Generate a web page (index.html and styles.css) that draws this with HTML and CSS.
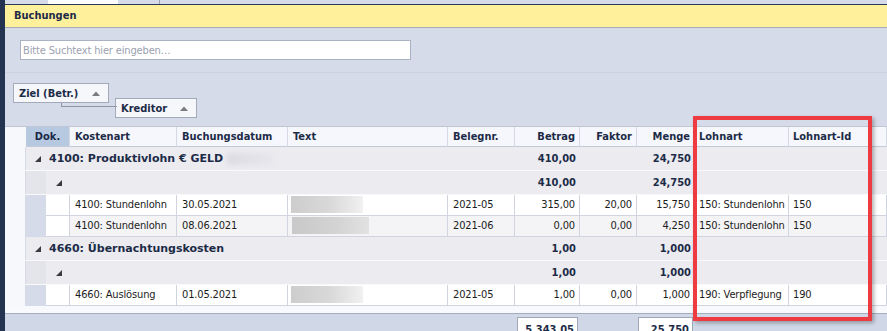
FILE: index.html
```html
<!DOCTYPE html>
<html>
    <head>
        <meta charset="UTF-8">
        <title>Buchungen</title>
        <link rel="stylesheet" href="styles.css">
    </head>
    <body>
        <div class="app">
            <div class="side"></div>

            <div class="main">
                <div class="tabs">
                    <span class="tab first"></span>
                    <span class="tab active"></span>
                    <span class="tab third"></span>
                </div>

                <div class="title">Buchungen</div>

                <div class="search-panel">
                    <input class="search" type="text" placeholder="Bitte Suchtext hier eingeben…">
                </div>

                <div class="group-panel">
                    <div class="gbox ziel">
                        Ziel (Betr.)
                        <svg class="sort" width="8" height="5" viewBox="0 0 8 5"><polygon points="0,5 4,0.5 8,5" fill="#7b7b7b"/></svg>
                    </div>
                    <div class="gbox kred">
                        Kreditor
                        <svg class="sort" width="8" height="5" viewBox="0 0 8 5"><polygon points="0,5 4,0.5 8,5" fill="#7b7b7b"/></svg>
                    </div>
                </div>

                <div class="grid">
                    <div class="row head">
                        <div class="ind"></div>
                        <div class="hcell c-dok sorted">Dok.</div>
                        <div class="hcell c-kst">Kostenart</div>
                        <div class="hcell c-dat">Buchungsdatum</div>
                        <div class="hcell c-txt">Text</div>
                        <div class="hcell c-bel">Belegnr.</div>
                        <div class="hcell c-bet num">Betrag</div>
                        <div class="hcell c-fak num">Faktor</div>
                        <div class="hcell c-men num">Menge</div>
                        <div class="hcell c-lohn">Lohnart</div>
                        <div class="hcell c-lid">Lohnart-Id</div>
                    </div>

                    <!-- group 4100 -->
                    <div class="row grp">
                        <div class="ind"></div>
                        <div class="glabel lvl1">
                            <svg class="exp" width="6" height="6" viewBox="0 0 6 6"><polygon points="6,0 6,6 0,6" fill="#3a3a3a"/></svg>
                            <span class="gtext">4100: Produktivlohn € GELD</span><span class="blur soft"></span>
                        </div>
                        <div class="gcell c-bel"></div>
                        <div class="gcell c-bet num">410,00</div>
                        <div class="gcell c-fak"></div>
                        <div class="gcell c-men num">24,750</div>
                        <div class="gcell rest"></div>
                    </div>
                    <div class="row grp">
                        <div class="ind"></div>
                        <div class="gindent"></div>
                        <div class="glabel lvl2">
                            <svg class="exp" width="6" height="6" viewBox="0 0 6 6"><polygon points="6,0 6,6 0,6" fill="#3a3a3a"/></svg>
                        </div>
                        <div class="gcell c-bel"></div>
                        <div class="gcell c-bet num">410,00</div>
                        <div class="gcell c-fak"></div>
                        <div class="gcell c-men num">24,750</div>
                        <div class="gcell rest"></div>
                    </div>
                    <div class="row data">
                        <div class="ind"></div>
                        <div class="dindent"></div>
                        <div class="cell c-dok2"></div>
                        <div class="cell c-kst">4100: Stundenlohn</div>
                        <div class="cell c-dat">30.05.2021</div>
                        <div class="cell c-txt"><span class="blur"></span></div>
                        <div class="cell c-bel">2021-05</div>
                        <div class="cell c-bet num">315,00</div>
                        <div class="cell c-fak num">20,00</div>
                        <div class="cell c-men num">15,750</div>
                        <div class="cell c-lohn">150: Stundenlohn</div>
                        <div class="cell c-lid">150</div>
                    </div>
                    <div class="row data alt">
                        <div class="ind"></div>
                        <div class="dindent"></div>
                        <div class="cell c-dok2"></div>
                        <div class="cell c-kst">4100: Stundenlohn</div>
                        <div class="cell c-dat">08.06.2021</div>
                        <div class="cell c-txt"><span class="blur wide"></span></div>
                        <div class="cell c-bel">2021-06</div>
                        <div class="cell c-bet num">0,00</div>
                        <div class="cell c-fak num">0,00</div>
                        <div class="cell c-men num">4,250</div>
                        <div class="cell c-lohn">150: Stundenlohn</div>
                        <div class="cell c-lid">150</div>
                    </div>

                    <!-- group 4660 -->
                    <div class="row grp">
                        <div class="ind"></div>
                        <div class="glabel lvl1">
                            <svg class="exp" width="6" height="6" viewBox="0 0 6 6"><polygon points="6,0 6,6 0,6" fill="#3a3a3a"/></svg>
                            <span class="gtext">4660: Übernachtungskosten</span>
                        </div>
                        <div class="gcell c-bel"></div>
                        <div class="gcell c-bet num">1,00</div>
                        <div class="gcell c-fak"></div>
                        <div class="gcell c-men num">1,000</div>
                        <div class="gcell rest"></div>
                    </div>
                    <div class="row grp">
                        <div class="ind"></div>
                        <div class="gindent"></div>
                        <div class="glabel lvl2">
                            <svg class="exp" width="6" height="6" viewBox="0 0 6 6"><polygon points="6,0 6,6 0,6" fill="#3a3a3a"/></svg>
                        </div>
                        <div class="gcell c-bel"></div>
                        <div class="gcell c-bet num">1,00</div>
                        <div class="gcell c-fak"></div>
                        <div class="gcell c-men num">1,000</div>
                        <div class="gcell rest"></div>
                    </div>
                    <div class="row data">
                        <div class="ind"></div>
                        <div class="dindent"></div>
                        <div class="cell c-dok2"></div>
                        <div class="cell c-kst">4660: Auslösung</div>
                        <div class="cell c-dat">01.05.2021</div>
                        <div class="cell c-txt"><span class="blur"></span></div>
                        <div class="cell c-bel">2021-05</div>
                        <div class="cell c-bet num">1,00</div>
                        <div class="cell c-fak num">0,00</div>
                        <div class="cell c-men num">1,000</div>
                        <div class="cell c-lohn">190: Verpflegung</div>
                        <div class="cell c-lid">190</div>
                    </div>

                    <div class="grid-end"></div>
                </div>

                <div class="footer">
                    <div class="f-lead"></div>
                    <div class="f-col c-bet"><div class="sum">5.343,05</div></div>
                    <div class="f-col c-fak"></div>
                    <div class="f-col c-men"><div class="sum">25.750</div></div>
                </div>
            </div>

            <div class="highlight"></div>
        </div>
    </body>
</html>
```

FILE: styles.css
```css
* {
    margin: 0;
    padding: 0;
    box-sizing: border-box;
}

body {
    width: 887px;
    height: 331px;
    overflow: hidden;
    background: #d5dbe8;
    font-family: "DejaVu Sans Condensed", "DejaVu Sans", sans-serif;
    font-stretch: condensed;
    font-size: 11px;
    color: #1e1e1e;
}

.app {
    position: relative;
    display: flex;
    height: 331px;
}

.side {
    width: 5px;
    flex: none;
    background: #243350;
}

.main {
    flex: 1;
    min-width: 0;
    display: flex;
    flex-direction: column;
}

.main > * {
    flex: none;
}

/* tab strip on top */
.tabs {
    height: 5px;
    display: flex;
    border-bottom: 1px solid #2a3957;
}

.tab {
    height: 4px;
}

.tab.first {
    width: 43px;
}

.tab.active {
    width: 70px;
    background: #ffffff;
}

.tab.third {
    width: 42px;
    border-right: 1px solid #9aa3b5;
}

.title {
    height: 23px;
    background: #fff09b;
    border-bottom: 1px solid #a6adbb;
    padding-left: 9px;
    line-height: 22px;
    font-weight: bold;
    color: #1d2b47;
}

.search-panel {
    height: 44px;
    padding: 12px 0 0 15px;
}

.search {
    display: block;
    width: 391px;
    height: 20px;
    border: 1px solid #aab2c4;
    background: #ffffff;
    padding-left: 2px;
    font-family: inherit;
    font-stretch: condensed;
    font-size: 11px;
    letter-spacing: -0.15px;
    outline: none;
}

.search::placeholder {
    color: #9ba1af;
}

/* group by panel */
.group-panel {
    height: 54px;
    border-top: 1px solid #cbd1de;
    display: flex;
    align-items: flex-start;
    padding: 10px 0 0 8px;
}

.gbox {
    position: relative;
    height: 20px;
    display: flex;
    align-items: center;
    justify-content: space-between;
    padding: 0 8px 0 5px;
    background: #f5f7fb;
    border: 1px solid #a3aab9;
    font-weight: bold;
    color: #1d2b47;
}

.ziel {
    width: 96px;
}

.kred {
    width: 82px;
    margin: 15px 0 0 6px;
}

.kred::before {
    content: "";
    position: absolute;
    left: -55px;
    top: 4px;
    width: 55px;
    height: 3px;
    border-left: 1px solid #8e96a8;
    border-bottom: 1px solid #8e96a8;
}

.sort {
    margin-top: 1px;
}

/* grid */
.grid {
    border-top: 1px solid #c0c6d3;
    background: #f8f9fc;
}

.row {
    display: flex;
}

.ind {
    width: 21px;
    flex: none;
    background: #f7f8fc;
    border-right: 1px solid #d6dae4;
}

.head .ind {
    border-right: none;
}

.hcell,
.cell,
.gcell {
    flex: none;
    white-space: nowrap;
    overflow: hidden;
    padding: 0 4px 0 5px;
}

.hcell {
    height: 20px;
    line-height: 19px;
    background: #f5f7fc;
    border-right: 1px solid #d4d9e4;
    border-bottom: 1px solid #c3c9d6;
    font-weight: bold;
    color: #1d2b47;
}

.hcell.sorted {
    background: #b6c9e1;
    text-align: center;
    padding: 0;
}

.num {
    text-align: right;
}

.c-dok { width: 44px; }
.c-dok2 { width: 24px; }
.c-kst { width: 107px; }
.c-dat { width: 111px; }
.c-txt { width: 160px; }
.c-bel { width: 67px; }
.c-bet { width: 65px; }
.c-fak { width: 57px; }
.c-men { width: 58px; }
.c-lohn { width: 94px; padding-left: 4px; }
.c-lid { flex: 1; padding-left: 4px; }

.grp {
    height: 24px;
    background: #ebebf0;
    border-bottom: 1px solid #f9f9fb;
    font-weight: bold;
    color: #1d2b47;
    line-height: 23px;
}

.glabel {
    flex: none;
    display: flex;
    align-items: center;
    white-space: nowrap;
}

.glabel.lvl1 {
    width: 422px;
    padding-left: 9px;
}

.glabel.lvl2 {
    width: 402px;
    padding-left: 10px;
}

.gtext {
    font-family: "DejaVu Sans", sans-serif;
    font-stretch: normal;
}

.exp {
    margin-right: 8px;
    margin-top: 1px;
}

.gindent {
    width: 20px;
    flex: none;
    background: #e4e5eb;
}

.gcell.rest {
    flex: 1;
}

.data {
    height: 21px;
    line-height: 20px;
    background: #ffffff;
}

.data.alt {
    background: #f4f4f6;
}

.dindent {
    width: 20px;
    flex: none;
    background: #d5dbe8;
    border-bottom: 1px solid #d5dbe8;
}

.cell {
    border-right: 1px solid #d0d4df;
    border-bottom: 1px solid #d0d4df;
    letter-spacing: -0.15px;
    color: #1c1c1c;
}

.c-dok2 {
    background: #ffffff;
}

.cell.c-txt {
    padding-left: 3px;
}

.blur {
    display: block;
    margin-top: 1px;
    width: 72px;
    height: 17px;
    background: linear-gradient(90deg, #cdcdcd, #d9d9d9 55%, #f1f1f1);
    filter: blur(0.7px);
}

.blur.wide {
    width: 77px;
    margin-left: 1px;
    background: linear-gradient(90deg, #c8c8c8, #d4d4d4 60%, #e2e2e2);
}

.blur.soft {
    display: inline-block;
    width: 46px;
    height: 12px;
    margin: 0 0 0 4px;
    background: linear-gradient(90deg, #dcdce2, #e6e6eb);
    filter: blur(2px);
}

.grid-end {
    height: 8px;
    background: #f8f9fc;
    border-bottom: 1px solid #a5aec0;
}

/* summary footer */
.footer {
    flex: 1;
    display: flex;
    background: #d0d7e6;
    padding-top: 3px;
}

.f-lead {
    width: 510px;
}

.f-col {
    flex: none;
    padding: 0 2px 0 2px;
}

.f-col.c-men {
    padding: 0 2px 0 1px;
}

.sum {
    height: 22px;
    background: #ffffff;
    border: 1px solid #a0a8b8;
    padding: 5px 3px 0 0;
    text-align: right;
    font-weight: bold;
    color: #1d2b47;
}

/* red marker over the Lohnart columns */
.highlight {
    position: absolute;
    left: 693px;
    top: 116px;
    width: 179px;
    height: 205px;
    border: 4px solid #ee3b41;
    box-shadow: 2px 2px 4px rgba(0, 0, 0, 0.3);
}
```
